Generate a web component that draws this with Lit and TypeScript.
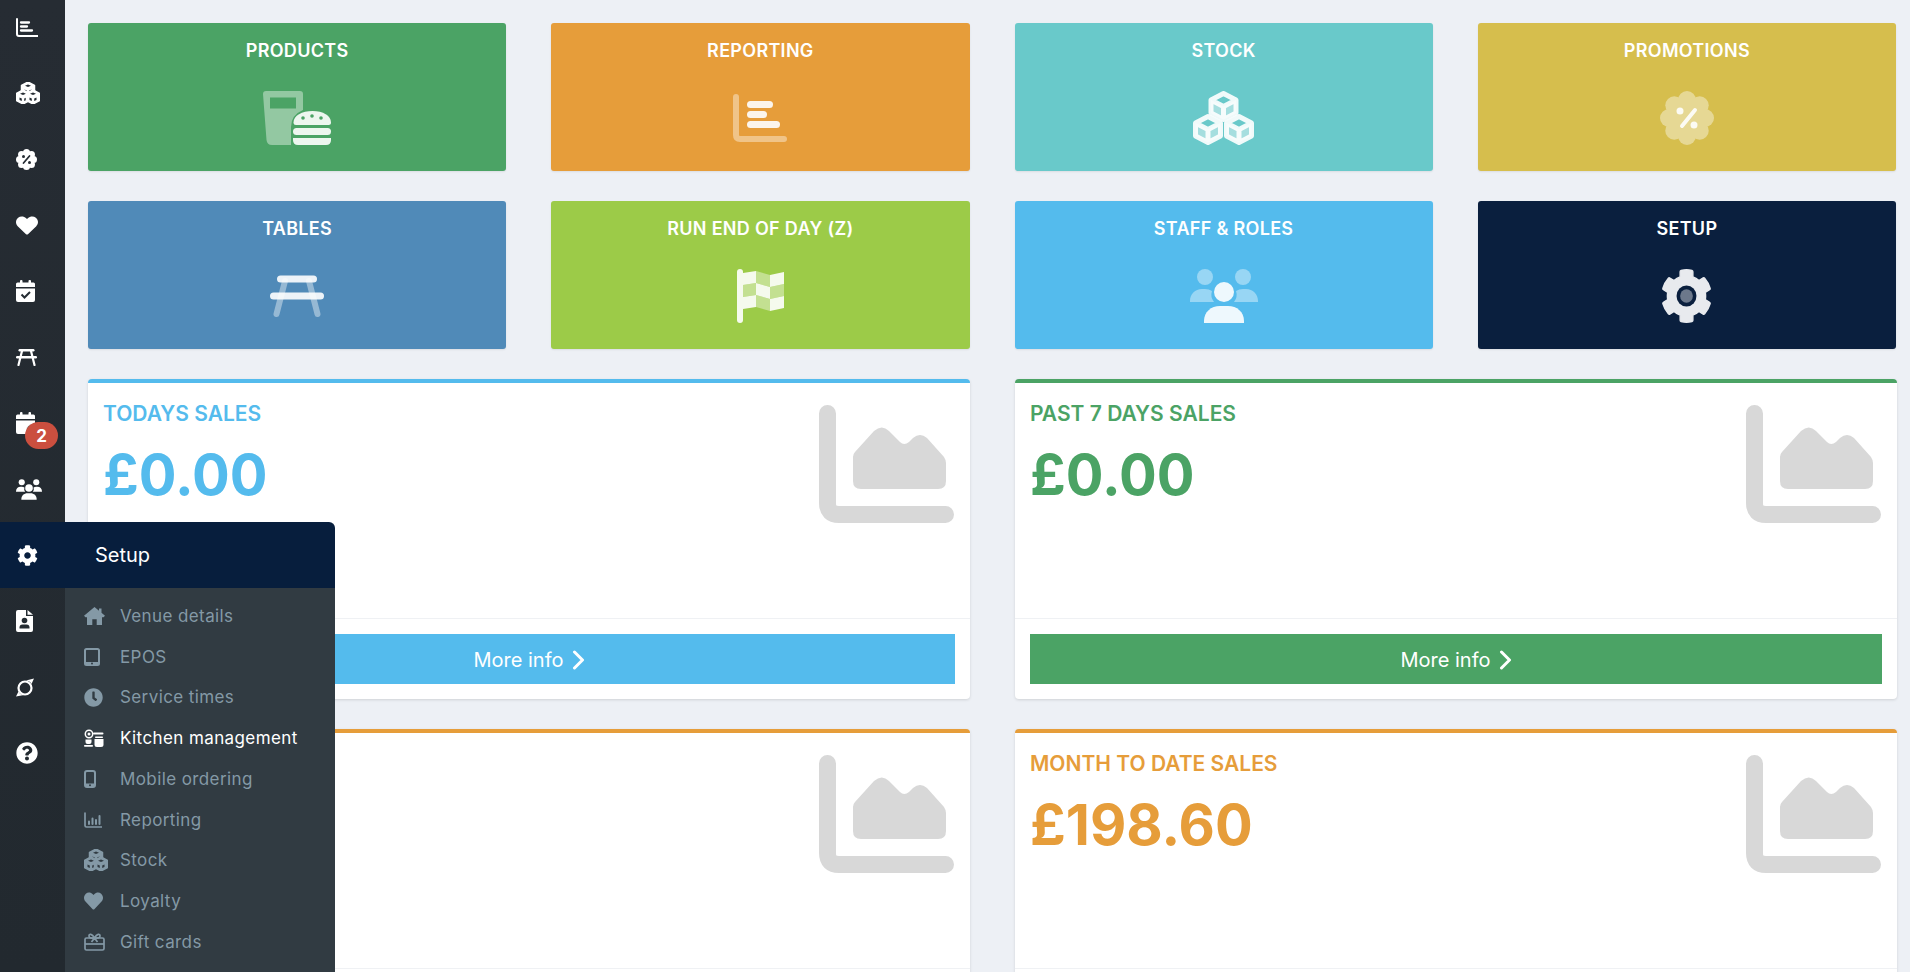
import { LitElement, html, css, svg } from "lit";
import { customElement } from "lit/decorators.js";

const GEAR = "M487.4 315.7l-42.6-24.6c4.3-23.2 4.3-47 0-70.2l42.6-24.6c4.9-2.8 7.1-8.6 5.5-14-11.1-35.6-30-67.8-54.7-94.6-3.8-4.1-10-5.1-14.8-2.3L380.8 110c-17.9-15.4-38.5-27.3-60.8-35.1V25.8c0-5.6-3.9-10.5-9.4-11.7-36.7-8.2-74.3-7.8-109.2 0-5.5 1.2-9.4 6.1-9.4 11.7V75c-22.2 7.9-42.8 19.8-60.8 35.1L88.7 85.5c-4.9-2.8-11-1.9-14.8 2.3-24.7 26.7-43.6 58.9-54.7 94.6-1.7 5.4.6 11.2 5.5 14L67.3 221c-4.3 23.2-4.3 47 0 70.2l-42.6 24.6c-4.9 2.8-7.1 8.6-5.5 14 11.1 35.6 30 67.8 54.7 94.6 3.8 4.1 10 5.1 14.8 2.3l42.6-24.6c17.9 15.4 38.5 27.3 60.8 35.1v49.2c0 5.6 3.9 10.5 9.4 11.7 36.7 8.2 74.3 7.8 109.2 0 5.5-1.2 9.4-6.1 9.4-11.7v-49.2c22.2-7.9 42.8-19.8 60.8-35.1l42.6 24.6c4.9 2.8 11 1.9 14.8-2.3 24.7-26.7 43.6-58.9 54.7-94.6 1.5-5.5-.7-11.3-5.6-14.1zM256 336c-44.1 0-80-35.9-80-80s35.9-80 80-80 80 35.9 80 80-35.9 80-80 80z";
const HEART = "M462.3 62.6C407.5 15.9 326 24.3 275.7 76.2L256 96.5l-19.7-20.3C186.1 24.3 104.5 15.9 49.7 62.6c-62.8 53.6-66.1 149.8-9.9 207.9l193.5 199.8c12.5 12.9 32.8 12.9 45.3 0l193.5-199.8c56.3-58.1 53-154.3-9.8-207.9z";
const QUESTION = "M504 256c0 136.997-111.043 248-248 248S8 392.997 8 256C8 119.083 119.043 8 256 8s248 111.083 248 248zM262.655 90c-54.497 0-89.255 22.957-116.549 63.758-3.536 5.286-2.353 12.415 2.715 16.258l34.699 26.31c5.205 3.947 12.621 3.008 16.665-2.122 17.864-22.658 30.113-35.797 57.303-35.797 20.429 0 45.698 13.148 45.698 32.958 0 14.976-12.363 22.667-32.534 33.976C247.128 238.528 216 254.941 216 296v4c0 6.627 5.373 12 12 12h56c6.627 0 12-5.373 12-12v-1.333c0-28.462 83.186-29.647 83.186-106.667 0-58.002-60.165-102-116.531-102zM256 338c-25.365 0-46 20.635-46 46 0 25.364 20.635 46 46 46s46-20.636 46-46c0-25.365-20.635-46-46-46z";
const CLOCK = "M256,8C119,8,8,119,8,256S119,504,256,504,504,393,504,256,393,8,256,8Zm92.49,313h0l-20,25a16,16,0,0,1-22.49,2.5h0l-67-49.72a40,40,0,0,1-15-31.23V112a16,16,0,0,1,16-16h32a16,16,0,0,1,16,16V256l58,42.5A16,16,0,0,1,348.49,321Z";

const lobes = (c: number, r: number, rr: number, n = 8) =>
  Array.from({ length: n }, (_, i) => {
    const a = (i * 2 * Math.PI) / n - Math.PI / 2;
    return svg`<circle cx=${c + r * Math.cos(a)} cy=${c + r * Math.sin(a)} r=${rr}></circle>`;
  });

/* ---- large duotone tile icons: 54px tall ---- */
const icProducts = html`<svg width="68" height="54" viewBox="0 0 68 54" fill="#fff">
  <path class="d" fill-rule="evenodd" d="M3 0H37Q40 0 40 3V19Q28 24 28 36V54H9Q4 54 3.500 49L0 3Q0 0 3 0ZM7 6.500V17.500H33V6.500Z"></path>
  <g class="p">
    <path d="M33 34a2.500 2.500 0 0 1-2.500-2.500C30.500 24.500 39 20 49.500 20S68 24.500 68 31.500a2.500 2.500 0 0 1-2.500 2.500Z"></path>
    <rect x="30" y="37" width="38" height="7" rx="3.500"></rect>
    <path d="M30 47H68V49Q68 54 63 54H35Q30 54 30 49Z"></path>
  </g>
  <circle class="cut" cx="40" cy="27" r="1.800"></circle><circle class="cut" cx="49" cy="25" r="1.800"></circle><circle class="cut" cx="58" cy="27" r="1.800"></circle>
</svg>`;
const icReporting = html`<svg width="54" height="54" viewBox="0 0 54 54" fill="#fff">
  <path class="d" d="M3 6V44Q3 48 7 48H51" fill="none" stroke="#fff" stroke-width="6" stroke-linecap="round"></path>
  <g class="p"><rect x="14" y="10" width="26" height="7" rx="3.500"></rect><rect x="14" y="20" width="20" height="7" rx="3.500"></rect><rect x="14" y="30" width="33" height="7" rx="3.500"></rect></g>
</svg>`;
const icTable = html`<svg width="54" height="54" viewBox="0 0 54 54" fill="#fff">
  <path class="d" d="M15 12L6.500 45M39 12L47.500 45" stroke="#fff" stroke-width="6" stroke-linecap="round" fill="none"></path>
  <g class="p"><rect x="7" y="6.500" width="40" height="7" rx="3.500"></rect><rect x="0" y="23.500" width="54" height="7" rx="3.500"></rect></g>
</svg>`;
const flagTop = [4, 2, 6, 3], flagX = [6, 19, 33, 47];
const flagCell = (c: number, r: number, cls: string) => {
  const h = 12;
  const a = flagTop[c], b = flagTop[c + 1];
  return svg`<path class=${cls} d="M${flagX[c]} ${a + r * h}L${flagX[c + 1]} ${b + r * h}V${b + (r + 1) * h}L${flagX[c]} ${a + (r + 1) * h}Z"></path>`;
};
const icFlag = html`<svg width="47" height="54" viewBox="0 0 47 54" fill="#fff">
  <rect class="p" x="0" y="0" width="6" height="54" rx="3"></rect>
  ${[0, 1, 2].map((c) => [0, 1, 2].map((r) => flagCell(c, r, (c + r) % 2 === 0 ? "p" : "d")))}
</svg>`;
const cube = (cx: number, cy: number, w: number, h: number, s: number) => svg`
  <path class="d" d="M${cx - w} ${cy - h / 2}L${cx} ${cy}L${cx + w} ${cy - h / 2}V${cy + h / 2}L${cx} ${cy + h}L${cx - w} ${cy + h / 2}Z"></path>
  <path class="p" fill="none" stroke="#fff" stroke-width=${s} stroke-linejoin="round" d="M${cx} ${cy - h}L${cx + w} ${cy - h / 2}V${cy + h / 2}L${cx} ${cy + h}L${cx - w} ${cy + h / 2}V${cy - h / 2}ZM${cx - w} ${cy - h / 2}L${cx} ${cy}L${cx + w} ${cy - h / 2}M${cx} ${cy}V${cy + h}"></path>`;
const icStock = html`<svg width="61" height="54" viewBox="0 0 61 54" fill="#fff">
  ${cube(30.5, 15.5, 12.5, 13, 5)}${cube(15, 38.5, 12.500, 13, 5)}${cube(46, 38.5, 12.500, 13, 5)}
</svg>`;
const icPromo = html`<svg width="54" height="54" viewBox="0 0 54 54" fill="#fff">
  <g class="d"><circle cx="27" cy="27" r="20"></circle>${lobes(27, 18, 9)}</g>
  <g class="p"><circle cx="20" cy="20" r="3.500"></circle><circle cx="34" cy="34" r="3.500"></circle>
  <path d="M22 35L35 19" stroke="#fff" stroke-width="4" stroke-linecap="round"></path></g>
</svg>`;
const icStaff = html`<svg width="68" height="54" viewBox="0 0 68 54" fill="#fff">
  <g class="d"><circle cx="15" cy="8" r="8"></circle><circle cx="53" cy="8" r="8"></circle>
  <path d="M0 33V32C0 25 5 20 12 20H15Q19 20 22 22Q20 28 24 33Z"></path><path d="M68 33V32C68 25 63 20 56 20H53Q49 20 46 22Q48 28 44 33Z"></path></g>
  <g class="p"><circle cx="34" cy="23" r="10"></circle><path d="M14 54V52C14 43 21 37 30 37H38C47 37 54 43 54 52V54Z"></path></g>
</svg>`;
const icGear = html`<svg width="51" height="54" viewBox="0 0 512 512" preserveAspectRatio="none" fill="#fff">
  <path d=${GEAR} fill="#e8eaee" stroke="#e8eaee" stroke-width="14" stroke-linejoin="round"></path>
  <circle class="cut" cx="256" cy="256" r="100"></circle><circle class="d" cx="256" cy="256" r="64"></circle>
</svg>`;

/* ---- small solid icons ---- */
const sChart = html`<svg width="22" height="19" viewBox="0 0 22 19" fill="none" stroke="currentColor">
  <path d="M1 1V16Q1 18 3 18H21.500" stroke-width="2" stroke-linecap="round"></path>
  <path d="M5 4.500H13M5 8.500H11M5 12.500H16" stroke-width="2.300" stroke-linecap="round"></path>
</svg>`;
const scube = (cx: number, cy: number, bg: string) => svg`
  <path d="M${cx} ${cy - 7}L${cx + 6.500} ${cy - 3.500}V${cy + 3.500}L${cx} ${cy + 7}L${cx - 6.500} ${cy + 3.500}V${cy - 3.500}Z" fill="currentColor" stroke="currentColor" stroke-width="1.500" stroke-linejoin="round"></path>
  <path d="M${cx} ${cy - 4.500}L${cx + 3} ${cy - 3.200}L${cx} ${cy - 2}L${cx - 3} ${cy - 3.200}Z" class=${bg}></path>
  <path d="M${cx - 3.500} ${cy + .5}L${cx - 1.200} ${cy + 1.500}V${cy + 4}L${cx - 3.500} ${cy + 3}Z M${cx + 3.500} ${cy + .5}L${cx + 1.200} ${cy + 1.500}V${cy + 4}L${cx + 3.500} ${cy + 3}Z" class=${bg}></path>`;
const sCubes = (bg: string) => html`<svg width="24" height="22" viewBox="0 0 24 22">
  ${scube(12, 7, bg)}${scube(7, 15, bg)}${scube(17, 15, bg)}
</svg>`;
const sPromo = html`<svg width="21" height="21" viewBox="0 0 42 42" fill="currentColor">
  <circle cx="21" cy="21" r="16"></circle>${lobes(21, 14, 7)}
  <g class="darkfill"><circle cx="15" cy="15" r="3"></circle><circle cx="27" cy="27" r="3"></circle></g>
  <path class="darkstroke" d="M15 28L27 14" stroke-width="3.500" stroke-linecap="round"></path>
</svg>`;
const sHeart = (w: number, h: number) => html`<svg width=${w} height=${h} viewBox="0 20 512 470" preserveAspectRatio="none" fill="currentColor"><path d=${HEART}></path></svg>`;
const sCal = (check: boolean) => html`<svg width="19" height="22" viewBox="0 0 19 22" fill="currentColor">
  <rect x="4" y="0" width="2.500" height="5" rx="1"></rect><rect x="12.500" y="0" width="2.500" height="5" rx="1"></rect>
  <path d="M0 7V4Q0 2.500 1.500 2.500H17.500Q19 2.500 19 4V7Z"></path>
  <path d="M0 8.500H19V20Q19 22 17 22H2Q0 22 0 20Z"></path>
  ${check
    ? svg`<path class="darkstroke" d="M5.500 14.500L8.500 17.500L14 12" fill="none" stroke-width="2"></path>`
    : svg`<circle class="darkfill" cx="17" cy="19" r="7" stroke="#fff" stroke-width="1"></circle>`}
</svg>`;
const sTable = html`<svg width="21" height="17" viewBox="0 0 21 17" fill="currentColor" stroke="currentColor">
  <rect x="2.500" y="0" width="16" height="2.500" rx="1.200" stroke="none"></rect><rect x="0" y="7" width="21" height="2.500" rx="1.200" stroke="none"></rect>
  <path d="M6 2L2.500 16M15 2L18.500 16" stroke-width="2.200" stroke-linecap="round" fill="none"></path>
</svg>`;
const sUsers = html`<svg width="26" height="21" viewBox="0 0 68 54" fill="currentColor">
  <circle cx="15" cy="8" r="8"></circle><circle cx="53" cy="8" r="8"></circle>
  <path d="M0 33V32C0 25 5 20 12 20H15Q19 20 22 22Q20 28 24 33Z"></path><path d="M68 33V32C68 25 63 20 56 20H53Q49 20 46 22Q48 28 44 33Z"></path>
  <circle cx="34" cy="23" r="10"></circle><path d="M14 54V52C14 43 21 37 30 37H38C47 37 54 43 54 52V54Z"></path>
</svg>`;
const sGear = html`<svg width="21" height="21" viewBox="0 0 512 512" fill="#fff"><path d=${GEAR}></path></svg>`;
const sFile = html`<svg width="17" height="22" viewBox="0 0 17 22" fill="currentColor">
  <path d="M2 0H10V6H17V20Q17 22 15 22H2Q0 22 0 20V2Q0 0 2 0Z"></path><path d="M11.500 0L17 4.800H11.500Z"></path>
  <circle class="darkfill" cx="8.500" cy="10.500" r="2.800"></circle><path class="darkfill" d="M3.500 18.500V17.500Q3.500 14.500 6.500 14.500H10.500Q13.500 14.500 13.500 17.500V18.500Z"></path>
</svg>`;
const sOrbit = html`<svg width="18" height="19" viewBox="0 0 18 19" fill="currentColor">
  <circle cx="9" cy="10" r="6.500" fill="none" stroke="currentColor" stroke-width="2.200"></circle>
  <path d="M18 .5L10 2.500Q14.500 3 15.500 6Z"></path><path d="M0 18.500L8 17Q3.500 16.500 2.500 13.500Z"></path>
</svg>`;
const sQuestion = html`<svg width="22" height="22" viewBox="0 0 512 512" fill="currentColor"><path d=${QUESTION}></path></svg>`;

/* ---- menu-only icons ---- */
const mHome = html`<svg width="21" height="18" viewBox="0 0 21 18" fill="currentColor"><path d="M10.500 0L15 3.700V1.500H17.500V5.800L21 8.700L19.500 10.200H18V18H12.700V12.200H8.300V18H3V10.200H1.500L0 8.700Z"></path></svg>`;
const mTablet = html`<svg width="16" height="18" viewBox="0 0 16 18" fill="none" stroke="currentColor"><rect x="1" y="1" width="14" height="16" rx="1.500" stroke-width="2"></rect><rect x="1" y="14" width="14" height="3" fill="currentColor" stroke="none"></rect><circle cx="8" cy="15.500" r="1" class="menustroke" stroke="none"></circle></svg>`;
const mClock = html`<svg width="19" height="19" viewBox="0 0 512 512" fill="currentColor"><path d=${CLOCK}></path></svg>`;
const mKitchen = html`<svg width="20" height="18" viewBox="0 0 20 18" fill="currentColor">
  <circle cx="5" cy="5" r="3.700" fill="none" stroke="currentColor" stroke-width="1.500"></circle><circle cx="5" cy="5" r="1.500"></circle>
  <rect x="9" y="3.500" width="10.500" height="2" rx="1"></rect>
  <rect x="11" y="7.500" width="8" height="1.500" rx=".7"></rect>
  <path d="M10.500 10H19.500V15.500Q19.500 18 17 18H13Q10.500 18 10.500 15.500Z"></path>
  <path d="M1.500 10.500H7.500V13Q7.500 15 5.500 15H3.500Q1.500 15 1.500 13Z"></path><rect x="0" y="16" width="9" height="1.700" rx=".8"></rect>
</svg>`;
const mMobile = html`<svg width="12" height="18" viewBox="0 0 12 18" fill="none" stroke="currentColor"><rect x="1" y="1" width="10" height="16" rx="2" stroke-width="2"></rect><rect x="1" y="13.500" width="10" height="3.500" fill="currentColor" stroke="none"></rect><circle cx="6" cy="15.300" r="1" class="menustroke" stroke="none"></circle></svg>`;
const mReport = html`<svg width="18" height="16" viewBox="0 0 18 16" fill="none" stroke="currentColor" stroke-linecap="round"><path d="M1 1V13.500Q1 15 2.500 15H17.500" stroke-width="1.700"></path><path d="M5 9.500V12M8.500 6.500V12M12 8V12M15.500 4V12" stroke-width="2"></path></svg>`;
const mGift = html`<svg width="21" height="18" viewBox="0 0 21 18" fill="none" stroke="currentColor" stroke-width="1.700"><rect x="1" y="5" width="19" height="12" rx="1.500"></rect><path d="M1 11H20"></path><path d="M10.500 5C8 .5 5 .5 5 3S8 5 10.500 5C13 5 16 5.500 16 3S13 .5 10.500 5L7.500 9M10.500 5L13.500 9"></path></svg>`;

const ICON_CHEVRON = html`<svg class="chev" width="13" height="20" viewBox="0 0 13 20" fill="none" stroke="#fff" stroke-width="3" stroke-linecap="round" stroke-linejoin="round"><path d="M2.500 2L10.500 10L2.500 18"></path></svg>`;
const ICON_AREA = html`<svg class="area" width="135" height="118" viewBox="0 0 135 118" fill="#d8d8d8">
  <path d="M8.500 8.500V98Q8.500 109.500 20 109.500H126.500" fill="none" stroke="#d8d8d8" stroke-width="17" stroke-linecap="round"></path>
  <path d="M34 76V52Q34 49 36 47L55 26Q63 19 70 26L81 37Q85 41 90 37L94 33Q101 27 108 33L125 52Q127 55 127 58V76Q127 84 119 84H42Q34 84 34 76Z"></path>
</svg>`;

const TILES = [
  ["PRODUCTS", "green", icProducts],
  ["REPORTING", "orange", icReporting],
  ["STOCK", "teal", icStock],
  ["PROMOTIONS", "yellow", icPromo],
  ["TABLES", "steel", icTable],
  ["RUN END OF DAY (Z)", "lime", icFlag],
  ["STAFF & ROLES", "sky", icStaff],
  ["SETUP", "navy", icGear],
] as const;

const CARDS = [
  { t: "TODAYS SALES", v: "£0.00", c: "sky", more: true },
  { t: "PAST 7 DAYS SALES", v: "£0.00", c: "green", more: true },
  { t: "", v: "", c: "orange", more: false },
  { t: "MONTH TO DATE SALES", v: "£198.60", c: "orange", more: false },
];

const MENU = [
  ["Venue details", mHome],
  ["EPOS", mTablet],
  ["Service times", mClock],
  ["Kitchen management", mKitchen],
  ["Mobile ordering", mMobile],
  ["Reporting", mReport],
  ["Stock", sCubes("menufill")],
  ["Loyalty", sHeart(19, 18)],
  ["Gift cards", mGift],
] as const;

const RAIL = [sChart, sCubes("darkfill"), sPromo, sHeart(22, 19), sCal(true), sTable, sCal(false), sUsers, sGear, sFile, sOrbit, sQuestion];

@customElement("app-root")
export class AppRoot extends LitElement {
  static styles = css`
    :host { display: block; height: 972px; overflow: hidden; position: relative; font-family: Inter, "Liberation Sans", sans-serif; background: #edf0f5; }
    .page { display: flex; height: 972px; }
    .rail { width: 65px; flex: none; background: linear-gradient(#262c33, #22292f); color: #fff; }
    .rail-list { margin-top: -6px; display: flex; flex-direction: column; }
    .slot { height: 66px; display: flex; align-items: center; padding-left: 16px; position: relative; flex: none; }
    .badge { position: absolute; left: 25px; top: 32px; width: 33px; height: 27px; border-radius: 14px; background: #cb4f3f; color: #fff; font-size: 17px; font-weight: 700; display: flex; align-items: center; justify-content: center; }
    .darkfill { fill: #252c33; }
    .darkstroke { stroke: #252c33; }
    .menufill { fill: #313b42; }
    .menustroke { fill: #313b42; }
    .main { flex: 1; min-width: 0; padding: 23px 14px 0 23px; }
    .tiles { display: grid; grid-template-columns: repeat(4, 1fr); gap: 30px 45px; }
    .tile { height: 148px; box-sizing: border-box; border-radius: 3px; padding-top: 18px; display: flex; flex-direction: column; align-items: center; color: #fff; box-shadow: 0 1px 2px rgba(0,0,0,.08); background: var(--c); }
    .tile h3 { margin: 0; font-size: 18px; line-height: 20px; font-weight: 600; letter-spacing: .3px; }
    .tile svg { margin-top: 30px; display: block; }
    .d { opacity: .4; }
    .p { opacity: .9; }
    .cut { fill: var(--c); }
    .green { --c: #4ba365; }
    .orange { --c: #e69d3a; }
    .teal { --c: #69c9ca; }
    .yellow { --c: #d6be4d; }
    .steel { --c: #508ab8; }
    .lime { --c: #9ccb48; }
    .sky { --c: #54bbed; }
    .navy { --c: #0a1f3e; }
    .cards { display: grid; grid-template-columns: 1fr 1fr; gap: 30px 45px; margin: 30px -1px 0 0; }
    .card { height: 320px; box-sizing: border-box; background: #fff; border-top: 4px solid var(--c); border-radius: 4px; box-shadow: 0 1px 3px rgba(0,0,0,.13); display: flex; flex-direction: column; position: relative; }
    .card-body { flex: 1; padding: 19px 15px 0; color: var(--c); }
    .card-title { font-size: 21px; line-height: 24px; font-weight: 600; }
    .card-value { font-size: 56px; line-height: 64px; font-weight: 700; margin-top: 17px; }
    .area { position: absolute; right: 16px; top: 22px; }
    .card-foot { border-top: 1px solid #eff1f4; padding: 15px; }
    .btn { height: 50px; box-sizing: border-box; padding-top: 1px; background: var(--c); color: #fff; font-size: 20px; display: flex; align-items: center; justify-content: center; gap: 8px; }
    .fly { position: absolute; left: 0; top: 522px; width: 335px; height: 450px; display: flex; flex-direction: column; }
    .fly-head { height: 66px; flex: none; background: #071e3d; border-radius: 0 6px 0 0; color: #fff; display: flex; align-items: center; font-size: 20px; }
    .fly-head .ico { width: 95px; padding-left: 17px; box-sizing: border-box; display: flex; }
    .fly-list { margin-left: 65px; flex: 1; background: #313b42; padding-top: 7.500px; color: #8499a6; }
    .item { height: 40.750px; display: flex; align-items: center; font-size: 17px; letter-spacing: .4px; }
    .item.on { color: #fff; }
    .item .ico { width: 55px; padding-left: 19px; box-sizing: border-box; display: flex; flex: none; }
  `;

  render() {
    return html`
      <div class="page">
        <nav class="rail"><div class="rail-list">
          ${RAIL.map((ic, i) => html`<div class="slot">${ic}${i === 6 ? html`<span class="badge">2</span>` : ""}</div>`)}
        </div></nav>
        <main class="main">
          <section class="tiles">
            ${TILES.map(([t, c, ic]) => html`<div class="tile ${c}"><h3>${t}</h3>${ic}</div>`)}
          </section>
          <section class="cards">
            ${CARDS.map((k) => html`<div class="card ${k.c}">
              <div class="card-body">
                ${k.t ? html`<div class="card-title">${k.t}</div><div class="card-value">${k.v}</div>` : ""}
              </div>
              ${ICON_AREA}
              <div class="card-foot"><div class="btn">${k.more ? html`More info ${ICON_CHEVRON}` : ""}</div></div>
            </div>`)}
          </section>
        </main>
      </div>
      <aside class="fly">
        <div class="fly-head"><span class="ico">${sGear}</span>Setup</div>
        <div class="fly-list">
          ${MENU.map(([t, ic]) => html`<div class="item ${t === "Kitchen management" ? "on" : ""}"><span class="ico">${ic}</span>${t}</div>`)}
        </div>
      </aside>
    `;
  }
}
